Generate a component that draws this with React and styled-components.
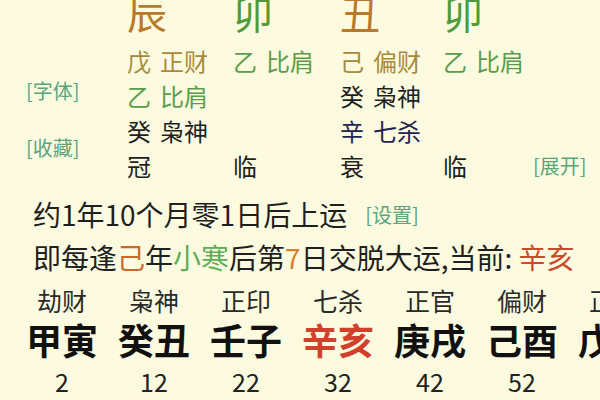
import styled, { createGlobalStyle } from "styled-components";

const GlobalStyle = createGlobalStyle`
  html, body {
    margin: 0;
    padding: 0;
    background: #fcfbe0;
  }
  body {
    font-family: "Noto Sans CJK SC", "Noto Sans", sans-serif;
  }
`

const Page = styled.div`
  width: 600px;
  height: 400px;
  overflow: hidden;
  background: #fcfbe0;
  color: #1f1f1f;
`
const Chart = styled.div`
  display: flex;
  margin-top: -13px;
`
const SideLinks = styled.div`
  width: 127px;
  box-sizing: border-box;
  padding: 92px 0 0 26px;
  display: flex;
  flex-direction: column;
  gap: 33px;
`
const Link = styled.span`
  font-size: 20px;
  line-height: 24px;
  color: #5aa57a;
  white-space: nowrap;
`
const Pillars = styled.div`
  display: grid;
  grid-template-columns: 106px 107px 103px 90px auto;
  grid-template-rows: 56px repeat(4, 35px);
  align-items: center;
`
const Branch = styled.div`
  align-self: start;
  font-size: 40px;
  line-height: 50px;
  color: ${p => p.$color};
`
const Stem = styled.div`
  display: flex;
  gap: 9px;
  font-size: 24px;
  line-height: 35px;
  white-space: nowrap;
  color: ${p => p.$color || "#1f1f1f"};
`
const Intro = styled.div`
  margin-top: 10px;
  padding-left: 33px;
  font-size: 28px;
  line-height: 43px;
  white-space: nowrap;
`
const Line = styled.div`
  display: flex;
  align-items: center;
`
const Mark = styled.span`
  color: ${p => p.$color};
`
const InlineLink = styled(Link)`
  margin-left: 18px;
`
const Luck = styled.div`
  display: grid;
  grid-template-columns: repeat(8, 92px);
  padding-left: 16px;
  margin-top: 6px;
`
const LuckCol = styled.div`
  display: flex;
  flex-direction: column;
  align-items: center;
`
const God = styled.div`
  font-size: 25px;
  line-height: 30px;
  color: #2a2a2a;
`
const Pillar = styled.div`
  margin-top: 2px;
  font-size: 36px;
  line-height: 44px;
  font-weight: 700;
  color: ${p => (p.$current ? "#d0402a" : "#111")};
`
const Age = styled.div`
  font-size: 25px;
  line-height: 40px;
  color: #222;
`

const BROWN = "#b87a2a"
const GREEN = "#4f9b3c"
const SMALL_BROWN = "#a88a3a"
const SMALL_GREEN = "#5b9c4a"

const branches = [
  { ch: "辰", color: BROWN },
  { ch: "卯", color: GREEN },
  { ch: "丑", color: BROWN },
  { ch: "卯", color: GREEN },
]

// hidden stems, row by row (null = empty cell)
const hidden = [
  [["戊", "正财", SMALL_BROWN], ["乙", "比肩", SMALL_GREEN], ["己", "偏财", SMALL_BROWN], ["乙", "比肩", SMALL_GREEN]],
  [["乙", "比肩", SMALL_GREEN], null, ["癸", "枭神"], null],
  [["癸", "枭神"], null, ["辛", "七杀", "#23234f"], null],
]

const stages = ["冠", "临", "衰", "临"]

const luck = [
  ["劫财", "甲寅", 2],
  ["枭神", "癸丑", 12],
  ["正印", "壬子", 22],
  ["七杀", "辛亥", 32, true],
  ["正官", "庚戌", 42],
  ["偏财", "己酉", 52],
  ["正财", "戊申", 62],
  ["伤官", "丁未", 72],
]

const App = () => {
  return (
    <Page>
      <GlobalStyle />
      <Chart>
        <SideLinks>
          <Link>[字体]</Link>
          <Link>[收藏]</Link>
        </SideLinks>
        <Pillars>
          {branches.map((b, i) => (
            <Branch key={"b" + i} $color={b.color}>{b.ch}</Branch>
          ))}
          <div />
          {hidden.map((row, r) =>
            [
              ...row.map((c, i) =>
                c ? (
                  <Stem key={r + "-" + i} $color={c[2]}>
                    <span>{c[0]}</span>
                    <span>{c[1]}</span>
                  </Stem>
                ) : (
                  <div key={r + "-" + i} />
                )
              ),
              <div key={r + "-x"} />,
            ]
          )}
          {stages.map((s, i) => (
            <Stem key={"s" + i}>{s}</Stem>
          ))}
          <Link>[展开]</Link>
        </Pillars>
      </Chart>
      <Intro>
        <Line>
          约1年10个月零1日后上运
          <InlineLink>[设置]</InlineLink>
        </Line>
        <Line>
          即每逢<Mark $color="#c66a2c">己</Mark>年<Mark $color="#5fae5a">小寒</Mark>后第
          <Mark $color="#d8802e">7</Mark>日交脱大运,当前:&nbsp;<Mark $color="#c94a2a">辛亥</Mark>
        </Line>
      </Intro>
      <Luck>
        {luck.map(([god, p, age, cur]) => (
          <LuckCol key={age}>
            <God>{god}</God>
            <Pillar $current={cur}>{p}</Pillar>
            <Age>{age}</Age>
          </LuckCol>
        ))}
      </Luck>
    </Page>
  )
}

export default App
